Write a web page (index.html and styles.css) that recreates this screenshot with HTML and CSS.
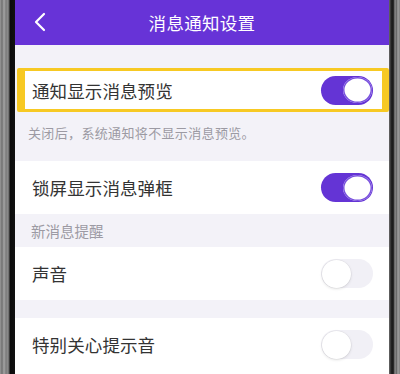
FILE: index.html
```html
<!DOCTYPE html>
<html lang="zh-CN">
<head>
<meta charset="utf-8">
<link rel="stylesheet" href="styles.css">
</head>
<body>
<div class="device">
  <div class="bezel-left"></div>
  <div class="screen">
    <header class="topbar">
      <svg class="back" width="14" height="20" viewBox="0 0 14 20"><path d="M11 2 L3 10 L11 18" fill="none" stroke="#fff" stroke-width="2.2" stroke-linecap="round" stroke-linejoin="round"/></svg>
      <div class="title">消息通知设置</div>
    </header>
    <div class="content">
      <div class="row highlight">
        <span class="label">通知显示消息预览</span>
        <span class="toggle on"><span class="knob"></span></span>
      </div>
      <div class="caption">关闭后，系统通知将不显示消息预览。</div>
      <div class="row">
        <span class="label">锁屏显示消息弹框</span>
        <span class="toggle on"><span class="knob"></span></span>
      </div>
      <div class="section">新消息提醒</div>
      <div class="row">
        <span class="label">声音</span>
        <span class="toggle off"><span class="knob"></span></span>
      </div>
      <div class="gap"></div>
      <div class="row last">
        <span class="label">特别关心提示音</span>
        <span class="toggle off"><span class="knob"></span></span>
      </div>
    </div>
  </div>
  <div class="bezel-right"></div>
</div>
</body>
</html>
```

FILE: styles.css
```css
* { box-sizing: border-box; }
html, body { margin: 0; padding: 0; }
body {
  width: 400px;
  height: 374px;
  overflow: hidden;
  font-family: "Noto Sans CJK SC", "Noto Sans", sans-serif;
  background: #f3f2f8;
}
.device {
  display: flex;
  width: 400px;
  height: 374px;
}
.bezel-left {
  width: 15px;
  flex: none;
  background: linear-gradient(90deg, #9a9a9a 0, #6f6f6f 2px, #a5a5a5 4px, #7a7a7a 6px, #8e8e8e 8px, #3a3a3a 9.5px, #0b0b0b 10.5px, #111 15px);
}
.bezel-right {
  width: 11px;
  flex: none;
  background: linear-gradient(90deg, #6d6d6d 0, #3a3a3a 1.5px, #151515 3px, #2a2a2a 4.5px, #8a8a8a 6px, #6a6a6a 7.5px, #a0a0a0 9px, #7d7d7d 11px);
}
.screen {
  flex: 1;
  display: flex;
  flex-direction: column;
  background: #f3f2f8;
  overflow: hidden;
}
.topbar {
  height: 45px;
  flex: none;
  background: #6733d7;
  display: flex;
  align-items: center;
  justify-content: center;
  position: relative;
}
.back {
  position: absolute;
  left: 18px;
  top: 12px;
}
.title {
  color: #fff;
  font-size: 17.5px;
  letter-spacing: 0.3px;
}
.content {
  padding-top: 23px;
  display: flex;
  flex-direction: column;
}
.row {
  background: #fff;
  height: 53px;
  display: flex;
  align-items: center;
  justify-content: space-between;
  padding: 0 16px 0 17px;
}
.row.highlight {
  height: 44px;
  margin: 0 0 0 2px;
  border-style: solid;
  border-color: #f7c923;
  border-width: 3px 7px 3px 8px;
  border-radius: 2px;
  padding: 0 9px 0 7px;
}
.row.last { height: 56px; padding-bottom: 3px; }
.label {
  font-size: 17.5px;
  color: #333;
  letter-spacing: 0.1px;
}
.caption {
  height: 49px;
  padding: 11px 0 0 13px;
  font-size: 13px;
  color: #9c9aa3;
  letter-spacing: 0.35px;
}
.section {
  height: 33px;
  padding: 6px 0 0 16px;
  font-size: 14.5px;
  color: #9c9aa3;
}
.gap { height: 18px; }
.toggle {
  width: 52px;
  height: 29px;
  border-radius: 15px;
  display: flex;
  align-items: center;
  padding: 0 1px;
  flex: none;
}
.toggle.on {
  background: #6434d5;
  justify-content: flex-end;
}
.toggle.on .knob {
  width: 29px;
  height: 26px;
  border-radius: 50%;
  background: #fff;
  box-shadow: 0 0 0 1.5px #7a52de inset;
}
.toggle.off {
  background: #f1f0f6;
  justify-content: flex-start;
}
.toggle.off .knob {
  width: 29px;
  height: 28px;
  border-radius: 50%;
  background: #fff;
  box-shadow: 0 1px 3px rgba(0,0,0,0.12), 0 0 0 0.5px rgba(0,0,0,0.06);
}
```
